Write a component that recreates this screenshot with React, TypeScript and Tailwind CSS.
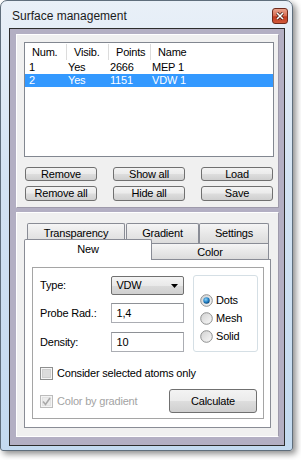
import React from 'react';

const btnBg =
  'bg-[linear-gradient(#f3f3f3_0%,#ebebeb_48%,#dddddd_52%,#cfcfcf_100%)] border border-[#707070] rounded-[3px]';
const tabBg = 'bg-[linear-gradient(#f5f5f5_0%,#e8e8e8_50%,#dcdcdc_100%)]';

const Btn: React.FC<{ label: string; className?: string }> = ({ label, className }) => (
  <div className={`flex items-center justify-center text-[11px] leading-none text-black ${btnBg} ${className ?? ''}`}>
    {label}
  </div>
);

const Radio: React.FC<{ label: string; checked?: boolean }> = ({ label, checked }) => (
  <div className="flex items-center h-[13px] gap-[3px]">
    <svg width="13" height="13" viewBox="0 0 13 13">
      <defs>
        <linearGradient id="rg" x1="0" y1="0" x2="1" y2="1">
          <stop offset="0" stopColor="#d0d0d0" />
          <stop offset="1" stopColor="#fafafa" />
        </linearGradient>
        <radialGradient id="rd" cx="0.4" cy="0.35" r="0.7">
          <stop offset="0" stopColor="#8fd3f7" />
          <stop offset="0.6" stopColor="#1e7ec3" />
          <stop offset="1" stopColor="#0b3d6b" />
        </radialGradient>
      </defs>
      <circle cx="6.5" cy="6.5" r="5.8" fill="url(#rg)" stroke="#8e8f8f" strokeWidth="1" />
      {checked && <circle cx="6.5" cy="6.5" r="3.2" fill="url(#rd)" />}
    </svg>
    <span>{label}</span>
  </div>
);

const Check: React.FC<{ disabled?: boolean; checked?: boolean }> = ({ disabled, checked }) => (
  <svg width="13" height="13" viewBox="0 0 13 13">
    <rect
      x="0.5"
      y="0.5"
      width="12"
      height="12"
      fill={disabled ? '#f4f4f4' : '#f6f6f6'}
      stroke={disabled ? '#bcbcbc' : '#8e8f8f'}
    />
    <rect x="2.5" y="2.5" width="8" height="8" fill={disabled ? '#ececec' : '#dcdcdc'} stroke={disabled ? '#e2e2e2' : '#cfcfcf'} />
    {checked && (
      <path d="M3 6.5 L5.5 9.5 L10 3" fill="none" stroke={disabled ? '#a9a9a9' : '#222'} strokeWidth="1.6" />
    )}
  </svg>
);

const Input: React.FC<{ value: string }> = ({ value }) => (
  <div className="w-[73px] h-[20px] border border-[#abadb3] border-t-[#8e9196] bg-white flex items-center pl-[4px]">
    {value}
  </div>
);

export default function App() {
  return (
    <div className="w-[301px] h-[460px] bg-white [font-family:'Liberation_Sans',Arial,sans-serif] text-[11px] leading-[13px] tracking-[-0.2px] text-black">
      <div className="w-[293px] h-[451px] rounded-t-[7px] rounded-b-[3px] border border-[#5f6e7c] bg-[linear-gradient(#e9f0f8,#d3e3f3_40%,#c3daf0)] shadow-[3px_3px_6px_rgba(0,0,0,0.45)] flex flex-col">
        {/* Title bar */}
        <div className="h-[27px] flex items-start pl-[11px] pr-[4px]">
          <span className="mt-[9px] text-[12px] leading-none tracking-normal text-[#1b1b1b]">
            Surface management
          </span>
          <div className="ml-auto mt-[7px] w-[16px] h-[16px] rounded-[3px] border border-[#6e2a1c] bg-[linear-gradient(#e9a48f,#d86a4f_50%,#c0391f_55%,#d15a3a)] flex items-center justify-center">
            <svg width="8" height="8" viewBox="0 0 8 8">
              <path d="M1 1 L7 7 M7 1 L1 7" stroke="#3a1a12" strokeWidth="3" />
              <path d="M1 1 L7 7 M7 1 L1 7" stroke="#fff" strokeWidth="1.6" />
            </svg>
          </div>
        </div>

        {/* Client */}
        <div className="ml-[8px] w-[276px] h-[418px] border border-[#2d2d2d] bg-[#b3afc3] pl-[6px] pt-[5px] pr-[5px] pb-[8px] flex flex-col">
          {/* Upper panel */}
          <div className="h-[174px] bg-[#f0f0f0] border border-t-white border-l-white border-b-[#9e9aab] border-r-[#9e9aab] flex flex-col">
            <div className="ml-[7px] mt-[7px] w-[250px] h-[115px] border border-[#828790] bg-white flex flex-col">
              <div className="h-[18px] flex items-center">
                {['Num.', 'Visib.', 'Points'].map((h) => (
                  <div key={h} className="w-[42px] flex items-center">
                    <span className="flex-1 pl-[7px]">{h}</span>
                    <div className="w-px h-[16px] bg-[#dcdcdc]" />
                  </div>
                ))}
                <span className="pl-[7px]">Name</span>
              </div>
              <div className="h-[13px] flex items-center">
                <span className="w-[42px] pl-[4px]">1</span>
                <span className="w-[42px] pl-[1px]">Yes</span>
                <span className="w-[42px] pl-[1px]">2666</span>
                <span className="pl-[1px]">MEP 1</span>
              </div>
              <div className="h-[13px] flex items-center bg-[#3399ff] text-white">
                <span className="w-[42px] pl-[4px]">2</span>
                <span className="w-[42px] pl-[1px]">Yes</span>
                <span className="w-[42px] pl-[1px]">1151</span>
                <span className="pl-[1px]">VDW 1</span>
              </div>
            </div>
            <div className="ml-[8px] mt-[10px] w-[248px] flex justify-between">
              <Btn label="Remove" className="w-[72px] h-[14px]" />
              <Btn label="Show all" className="w-[72px] h-[14px]" />
              <Btn label="Load" className="w-[72px] h-[14px]" />
            </div>
            <div className="ml-[8px] mt-[5px] w-[248px] flex justify-between">
              <Btn label="Remove all" className="w-[72px] h-[15px]" />
              <Btn label="Hide all" className="w-[72px] h-[15px]" />
              <Btn label="Save" className="w-[72px] h-[15px]" />
            </div>
          </div>

          {/* Splitter */}
          <div className="h-[4px]" />

          {/* Lower panel */}
          <div className="h-[225px] bg-[#f0f0f0] border border-t-white border-l-white border-b-white border-r-[#9e9aab] flex flex-col">
            <div className="ml-[7px] mt-[10px] w-[247px] flex flex-col">
              {/* Back row of tabs */}
              <div className="h-[20px] pl-[3px] flex">
                <div className={`w-[98px] h-[20px] border border-b-0 border-[#898c95] rounded-t-[2px] ${tabBg} flex justify-center pt-[3px]`}>
                  Transparency
                </div>
                <div className={`ml-px w-[73px] h-[20px] border border-b-0 border-[#898c95] rounded-t-[2px] ${tabBg} flex justify-center pt-[3px]`}>
                  Gradient
                </div>
                <div className={`w-[70px] h-[20px] border border-b-0 border-[#898c95] rounded-t-[2px] ${tabBg} flex justify-center pt-[3px]`}>
                  Settings
                </div>
              </div>
              {/* Front row of tabs */}
              <div className="h-[16px] flex items-end">
                <div className="relative z-10 -mb-px w-[128px] h-[21px] border border-b-0 border-[#898c95] rounded-t-[2px] bg-white flex justify-center pt-[3px]">
                  New
                </div>
                <div className={`-ml-px w-[118px] h-[16px] border border-b-0 border-[#898c95] ${tabBg} flex justify-center pt-[2px]`}>
                  Color
                </div>
              </div>
              {/* Tab page */}
              <div className="h-[169px] border border-[#898c95] bg-white pl-[7px] pt-[7px]">
                <div className="w-[232px] h-[152px] border border-[#a5a5a5] flex flex-col pl-[7px] pt-[7px]">
                  <div className="flex">
                    <div className="w-[144px] mt-px flex flex-col">
                      <div className="h-[19px] flex items-center">
                        <span className="w-[72px]">Type:</span>
                        <div className="w-[73px] h-[19px] border border-[#707070] rounded-[2px] bg-[linear-gradient(#f4f4f4,#e9e9e9_50%,#dadada_52%,#d0d0d0)] flex items-center pl-[4px] pr-[5px]">
                          <span className="flex-1">VDW</span>
                          <svg width="7" height="4" viewBox="0 0 7 4">
                            <path d="M0 0 H7 L3.5 4 Z" fill="#000" />
                          </svg>
                        </div>
                      </div>
                      <div className="mt-[8px] h-[20px] flex items-center">
                        <span className="w-[72px]">Probe Rad.:</span>
                        <Input value="1,4" />
                      </div>
                      <div className="mt-[9px] h-[20px] flex items-center">
                        <span className="w-[72px]">Density:</span>
                        <Input value="10" />
                      </div>
                    </div>
                    <div className="ml-[9px] w-[65px] h-[77px] border border-[#d5dfe5] rounded-[3px] pl-[6px] pt-[18px] flex flex-col gap-[5px]">
                      <Radio label="Dots" checked />
                      <Radio label="Mesh" />
                      <Radio label="Solid" />
                    </div>
                  </div>
                  <div className="mt-[15px] h-[13px] flex items-center gap-[4px]">
                    <Check />
                    <span>Consider selected atoms only</span>
                  </div>
                  <div className="mt-[9px] h-[24px] flex items-center pr-[6px]">
                    <Check disabled checked />
                    <span className="ml-[4px] text-[#a3a3a3]">Color by gradient</span>
                    <Btn label="Calculate" className="ml-auto w-[88px] h-[24px]" />
                  </div>
                </div>
              </div>
            </div>
          </div>
        </div>
      </div>
    </div>
  );
}
